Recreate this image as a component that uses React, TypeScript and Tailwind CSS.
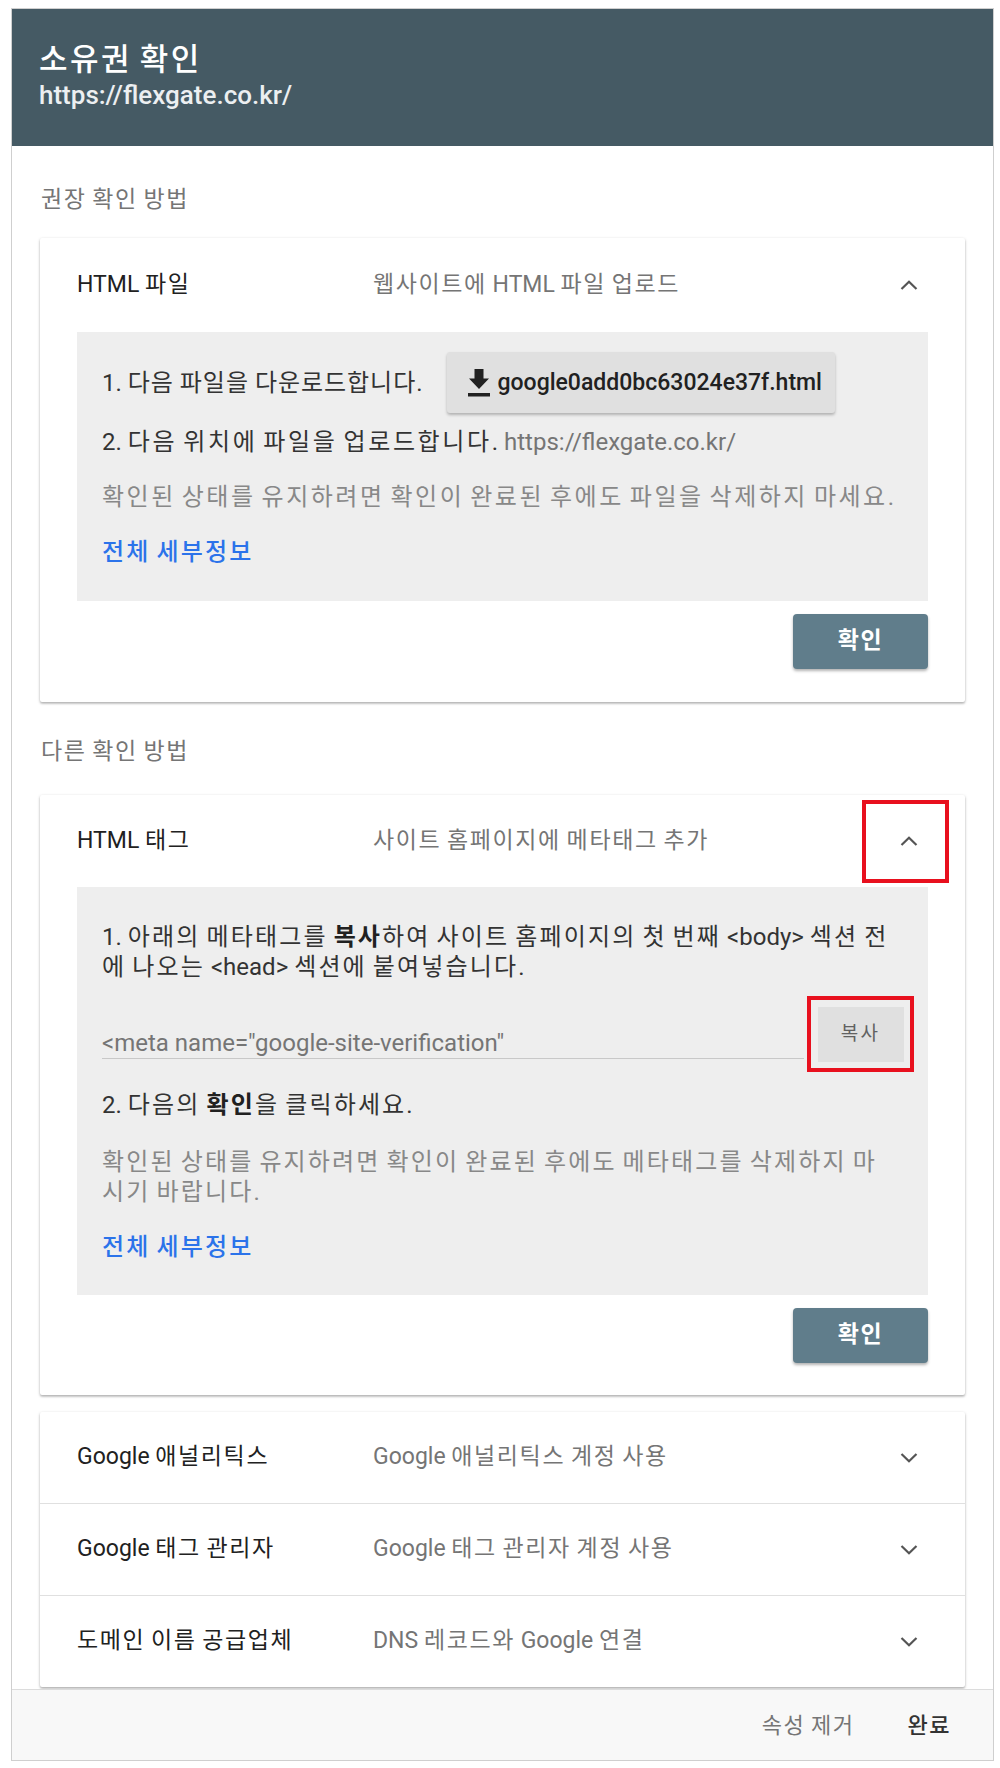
import React from 'react';

// Hangul runs get a little extra tracking so the CJK font advances like the original
const HANGUL = /([\uac00-\ud7a3]+)/;

const K: React.FC<{ children: string; t?: string }> = ({ children, t = 'tracking-[0.07em]' }) => (
  <>
    {children.split(HANGUL).map((part, i) =>
      i % 2 === 1 ? (
        <span key={i} className={t}>
          {part}
        </span>
      ) : (
        part
      )
    )}
  </>
);

const B: React.FC<{ children: string }> = ({ children }) => <K t="tracking-[0.09em]">{children}</K>;

const Chevron: React.FC<{ up?: boolean }> = ({ up }) => (
  <svg width="18" height="10" viewBox="0 0 18 10" className={up ? '' : 'rotate-180'}>
    <polyline points="1.5,9 9,1.8 16.5,9" fill="none" stroke="#555" strokeWidth="2.2" />
  </svg>
);

const DownloadIcon = () => (
  <svg width="22" height="28" viewBox="0 0 22 28">
    <path d="M6.5 0h9v9.5H21L11 20 1 9.5h5.5z" fill="#212121" />
    <rect x="0" y="24" width="22" height="3.5" fill="#212121" />
  </svg>
);

interface HeaderRowProps {
  label: string;
  description: string;
  open?: boolean;
  marked?: boolean;
  height: string;
}

const HeaderRow: React.FC<HeaderRowProps> = ({ label, description, open, marked, height }) => (
  <div className={`flex items-center pl-[37px] pr-[16px] ${height}`}>
    <div className="w-[296px] text-[23px] text-[#212121]">
      <K>{label}</K>
    </div>
    <div className="flex-1 text-[23px] text-[#757575]">
      <K>{description}</K>
    </div>
    <div
      className={`w-[87px] h-[83px] flex items-center justify-center pl-[6px] border-[4px] ${
        marked ? 'border-[#e8101e]' : 'border-transparent'
      }`}
    >
      <Chevron up={open} />
    </div>
  </div>
);

const ConfirmButton = () => (
  <div className="flex justify-end">
    <button className="w-[135px] h-[55px] rounded-[4px] bg-[#607d8b] text-white text-[23px] font-bold shadow-[0_2px_3px_rgba(0,0,0,0.3)]">
      <K>확인</K>
    </button>
  </div>
);

const otherMethods = [
  { label: 'Google 애널리틱스', description: 'Google 애널리틱스 계정 사용' },
  { label: 'Google 태그 관리자', description: 'Google 태그 관리자 계정 사용' },
  { label: '도메인 이름 공급업체', description: 'DNS 레코드와 Google 연결' },
];

const cardShadow = 'shadow-[0_1px_3px_rgba(0,0,0,0.25),0_2px_2px_rgba(0,0,0,0.12)]';

export default function App() {
  return (
    <div className="w-[1000px] h-[1768px] bg-white pt-[8px] pl-[11px] font-[Roboto,'Noto_Sans_CJK_KR',sans-serif]">
      <div className="w-[983px] h-[1753px] border border-[#cfcfcf] flex flex-col">
        {/* Header */}
        <div className="h-[137px] bg-[#455a64] pl-[27px] pt-[31px] text-white">
          <h1 className="text-[31px] leading-[40px] font-medium">
            <K t="tracking-[0.08em]">소유권 확인</K>
          </h1>
          <p className="text-[26px] leading-[30px] font-medium text-[#eceff1]">https://flexgate.co.kr/</p>
        </div>

        {/* Scroll area */}
        <div className="flex-1 overflow-hidden px-[28px]">
          <div className="pt-[39px] pl-[1px] text-[23px] leading-[30px] text-[#757575]">
            <K>권장 확인 방법</K>
          </div>

          {/* HTML file card */}
          <div className={`mt-[23px] bg-white rounded-[2px] pb-[33px] ${cardShadow}`}>
            <HeaderRow label="HTML 파일" description="웹사이트에 HTML 파일 업로드" open height="h-[94px]" />
            <div className="mx-[37px] bg-[#eeeeee] pl-[25px] pr-[14px] pt-[20px] pb-[34px] text-[24px] leading-[30px] text-[#333]">
              <div className="flex items-center h-[61px]">
                <span>
                  <K t="tracking-[0.04em]">1. 다음 파일을 다운로드합니다.</K>
                </span>
                <button className="ml-[24px] h-[61px] w-[388px] flex items-center pl-[21px] gap-[8px] bg-[#e0e0e0] rounded-[3px] shadow-[0_2px_3px_rgba(0,0,0,0.25)] text-[23px] font-medium text-[#212121]">
                  <DownloadIcon />
                  google0add0bc63024e37f.html
                </button>
              </div>
              <div className="mt-[14px]">
                <K t="tracking-[0.11em]">2. 다음 위치에 파일을 업로드합니다.</K>{' '}
                <span className="text-[#757575]">https://flexgate.co.kr/</span>
              </div>
              <div className="mt-[25px] text-[#888]">
                <K t="tracking-[0.105em]">확인된 상태를 유지하려면 확인이 완료된 후에도 파일을 삭제하지 마세요.</K>
              </div>
              <div className="mt-[25px] text-[#2b73ea] font-medium">
                <B>전체 세부정보</B>
              </div>
            </div>
            <div className="mx-[37px] mt-[13px]">
              <ConfirmButton />
            </div>
          </div>

          <div className="pt-[35px] pl-[1px] text-[23px] leading-[30px] text-[#757575]">
            <K>다른 확인 방법</K>
          </div>

          {/* HTML tag card */}
          <div className={`mt-[28px] bg-white rounded-[2px] pb-[32px] ${cardShadow}`}>
            <HeaderRow label="HTML 태그" description="사이트 홈페이지에 메타태그 추가" open marked height="h-[92px]" />
            <div className="mx-[37px] bg-[#eeeeee] pl-[25px] pr-[14px] pt-[35px] pb-[33px] text-[24px] leading-[30px] text-[#333]">
              <div className="whitespace-nowrap">
                <B>1. 아래의 메타태그를 </B>
                <b className="text-[#212121]">
                  <B>복사</B>
                </b>
                <B>하여 사이트 홈페이지의 첫 번째 &lt;body&gt; 섹션 전</B>
                <br />
                <B>에 나오는 &lt;head&gt; 섹션에 붙여넣습니다.</B>
              </div>
              <div className="mt-[14px] flex items-end h-[76px]">
                <div className="flex-1 mb-[13px] border-b border-[#c8c8c8] text-[#757575] whitespace-nowrap overflow-hidden">
                  &lt;meta name="google-site-verification"
                </div>
                <div className="ml-[3px] w-[107px] h-[76px] border-[4px] border-[#e8101e] flex items-center justify-center">
                  <button className="w-[86px] h-[55px] bg-[#e0e0e0] text-[19px] text-[#616161]">
                    <K t="tracking-[0.12em]">복사</K>
                  </button>
                </div>
              </div>
              <div className="mt-[18px]">
                <B>2. 다음의 </B>
                <b className="text-[#212121]">
                  <B>확인</B>
                </b>
                <B>을 클릭하세요.</B>
              </div>
              <div className="mt-[27px] text-[#888] whitespace-nowrap">
                <B>확인된 상태를 유지하려면 확인이 완료된 후에도 메타태그를 삭제하지 마</B>
                <br />
                <B>시기 바랍니다.</B>
              </div>
              <div className="mt-[25px] text-[#2b73ea] font-medium">
                <B>전체 세부정보</B>
              </div>
            </div>
            <div className="mx-[37px] mt-[13px]">
              <ConfirmButton />
            </div>
          </div>

          {/* Other methods list */}
          <div className={`mt-[17px] bg-white rounded-[2px] ${cardShadow}`}>
            {otherMethods.map((m, i) => (
              <div key={m.label} className={i > 0 ? 'border-t border-[#e0e0e0]' : ''}>
                <HeaderRow label={m.label} description={m.description} height="h-[91px]" />
              </div>
            ))}
          </div>
        </div>

        {/* Footer */}
        <div className="h-[71px] border-t border-[#dcdcdc] bg-[#f8f8f8] flex items-center justify-end pr-[42px] gap-[53px] text-[22px]">
          <span className="text-[#757575]">
            <K>속성 제거</K>
          </span>
          <span className="text-[#333] font-medium">
            <K>완료</K>
          </span>
        </div>
      </div>
    </div>
  );
}
